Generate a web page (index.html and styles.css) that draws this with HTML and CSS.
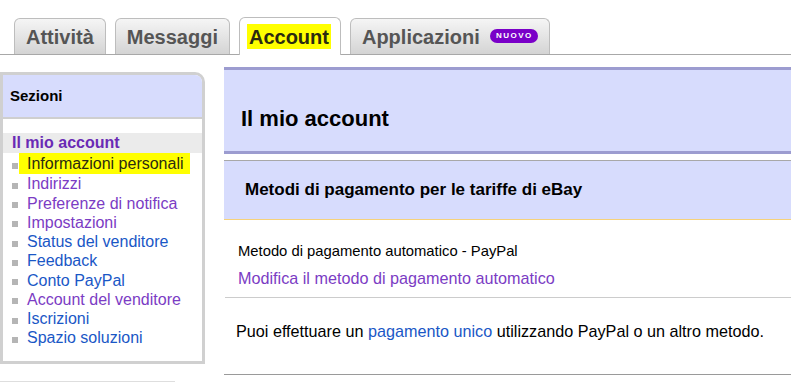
FILE: index.html
```html
<!DOCTYPE html>
<html lang="it">
<head>
<meta charset="utf-8">
<title>Il mio account</title>
<link rel="stylesheet" href="styles.css">
</head>
<body>
<div class="tabs">
  <div class="tab">Attività</div>
  <div class="tab">Messaggi</div>
  <div class="tab active"><span class="hl">Account</span></div>
  <div class="tab">Applicazioni <span class="badge">NUOVO</span></div>
</div>
<div class="layout">
  <div class="side-col">
    <div class="sidebar">
      <div class="side-head">Sezioni</div>
      <div class="side-body">
        <div class="side-title">Il mio account</div>
        <ul class="side-list">
          <li><span class="hl-item">Informazioni personali</span></li>
          <li><a class="visited">Indirizzi</a></li>
          <li><a class="visited">Preferenze di notifica</a></li>
          <li><a class="visited">Impostazioni</a></li>
          <li><a class="link">Status del venditore</a></li>
          <li><a class="link">Feedback</a></li>
          <li><a class="link">Conto PayPal</a></li>
          <li><a class="visited">Account del venditore</a></li>
          <li><a class="link">Iscrizioni</a></li>
          <li><a class="link">Spazio soluzioni</a></li>
        </ul>
      </div>
    </div>
    <div class="side-next"></div>
  </div>
  <div class="main">
    <div class="main-head">Il mio account</div>
    <div class="sec-head">Metodi di pagamento per le tariffe di eBay</div>
    <div class="sec-body">
      <div class="line">Metodo di pagamento automatico - PayPal</div>
      <div class="line gap"><a class="visited">Modifica il metodo di pagamento automatico</a></div>
    </div>
    <div class="sec-note">Puoi effettuare un <a class="link">pagamento unico</a> utilizzando PayPal o un altro metodo.</div>
  </div>
</div>
</body>
</html>
```
FILE: styles.css
```css
html, body {
  margin: 0;
  padding: 0;
  background: #fff;
  font-family: "Liberation Sans", Arial, sans-serif;
  color: #000;
}

.tabs {
  display: flex;
  gap: 9px;
  padding: 18px 0 0 14px;
  border-bottom: 1px solid #a8a8a8;
  height: 36px;
}

.tab {
  box-sizing: border-box;
  height: 36px;
  display: flex;
  align-items: center;
  padding: 2px 11px 0 11px;
  border: 1px solid #bdbdbd;
  border-bottom: none;
  border-radius: 6px 6px 0 0;
  background: linear-gradient(#f5f5f5, #d4d4d4);
  font-weight: bold;
  font-size: 20px;
  color: #555;
  white-space: pre;
}

.tab.active {
  height: 38px;
  margin-top: -1px;
  padding: 0 9px 0 7px;
  background: #fff;
  color: #2b2b10;
  position: relative;
}

.hl {
  background: #ffff00;
  padding: 1px 2px 0 2px;
  line-height: 24px;
}

.badge {
  display: inline-block;
  margin-left: 5px;
  width: 48px;
  height: 14px;
  line-height: 14px;
  border-radius: 8px;
  background: #7a00c8;
  color: #fff;
  font-size: 8px;
  font-weight: bold;
  letter-spacing: 1.5px;
  text-align: center;
  margin-top: -3px;
}

.layout {
  display: flex;
  align-items: flex-start;
}

.side-col {
  width: 205px;
  flex: none;
  margin-top: 17px;
}

.sidebar {
  border: 3px solid #d0d0d0;
  border-radius: 0 10px 0 0;
  overflow: hidden;
}

.side-head {
  background: #d7dcfd;
  height: 44px;
  box-sizing: border-box;
  padding: 12px 0 0 7px;
  font-size: 15px;
  font-weight: bold;
  line-height: 18px;
  border-bottom: 2px solid #cfcfcf;
}

.side-body {
  padding: 14px 0 13px 0;
}

.side-title {
  background: #ebebeb;
  height: 20px;
  line-height: 20px;
  padding-left: 9px;
  font-size: 16px;
  font-weight: bold;
  color: #6a2ab5;
}

.side-list {
  list-style: none;
  margin: 0;
  padding: 0 0 0 9px;
  font-size: 16px;
  line-height: 19.25px;
}

.side-list li {
  display: flex;
  align-items: center;
  gap: 9px;
}

.side-list li::before {
  content: "";
  width: 6px;
  height: 6px;
  background: #b5b5b5;
  flex: none;
  margin-top: 4px;
}

.hl-item {
  background: #ffff00;
  color: #2b2b10;
  margin-left: -8px;
  padding: 1px 6px 1px 8px;
}

.visited {
  color: #7b3cc4;
  text-decoration: none;
}

.link {
  color: #1a57c6;
  text-decoration: none;
}

.side-next {
  margin-top: 17px;
  width: 175px;
  border-top: 1px solid #dedede;
}

.main {
  flex: 1;
  margin-left: 19px;
  margin-top: 12px;
}

.main-head {
  background: #d7dcfd;
  border-top: 3px solid #9c9cd0;
  border-bottom: 3px solid #9c9cd0;
  padding: 36px 0 0 17px;
  height: 45px;
  font-size: 22px;
  font-weight: bold;
  line-height: 26px;
}

.sec-head {
  margin-top: 6px;
  border-top: 1px solid #a8a8a8;
  border-bottom: 1px solid #f6d27a;
  background: #d7dcfd;
  height: 60px;
  box-sizing: border-box;
  padding: 19px 0 0 21px;
  font-size: 17px;
  font-weight: bold;
  line-height: 20px;
}

.sec-body {
  padding: 22px 0 9px 13px;
  border-bottom: 1px solid #cccccc;
  margin-left: 1px;
  font-size: 14.8px;
  line-height: 19px;
}

.line.gap {
  margin-top: 8px;
  font-size: 16.2px;
}

.sec-note {
  padding: 24px 0 33px 12px;
  border-bottom: 1px solid #9a9a9a;
  font-size: 16.2px;
  line-height: 19px;
}
```
